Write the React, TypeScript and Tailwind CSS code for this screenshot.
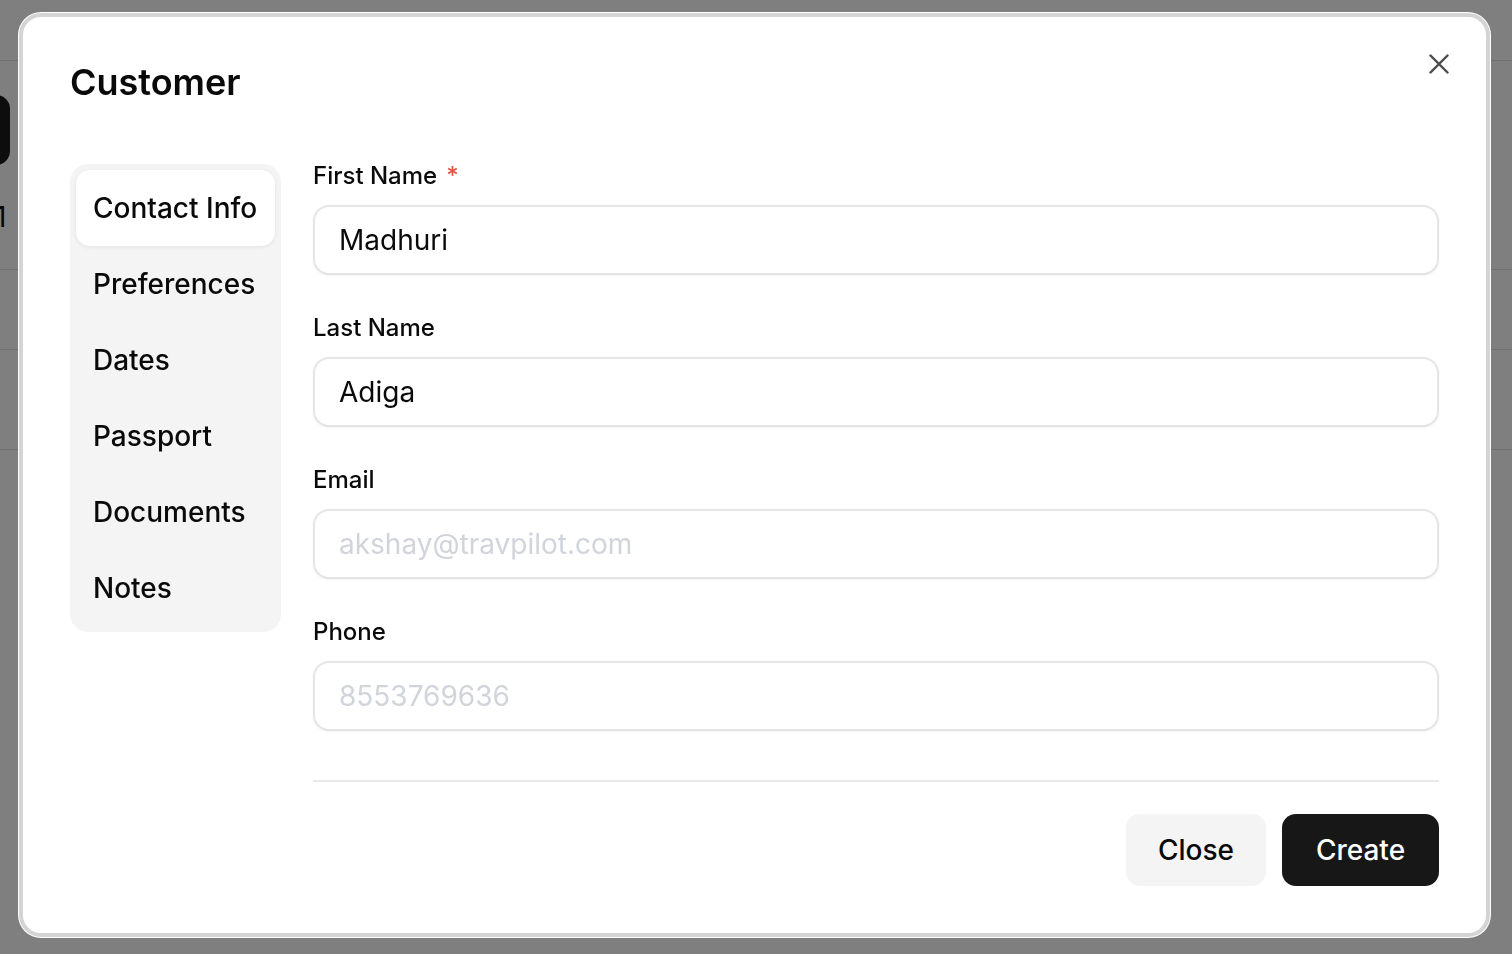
import { useState } from "react";

const tabs = ["Contact Info", "Preferences", "Dates", "Passport", "Documents", "Notes"];

interface FieldProps {
    label: string;
    value?: string;
    placeholder?: string;
    required?: boolean;
}

function Field({ label, value, placeholder, required }: FieldProps) {
    return (
        <div className="flex flex-col">
            <label className="h-[32px] flex items-center text-[24px] font-medium leading-[32px] text-[#0a0a0a]">
                {label}
                {required && <span className="ml-[9px] text-[#e0533d]">*</span>}
            </label>
            <input
                defaultValue={value}
                placeholder={placeholder}
                className="mt-[13px] h-[70px] w-full rounded-[16px] border-2 border-[#e5e5e5] bg-white px-[24px] text-[28px] text-[#0a0a0a] shadow-[0_1px_2px_rgba(0,0,0,0.05)] outline-none placeholder:text-[#d1d5db]"
            />
        </div>
    );
}

export default function App() {
    const [active, setActive] = useState("Contact Info");

    return (
        <div className="relative h-[954px] w-[1512px] overflow-hidden bg-white" style={{ fontFamily: "Inter, 'Noto Sans', sans-serif" }}>
            {/* page behind the dialog */}
            <div className="flex flex-col">
                <div className="h-[61px] border-b border-[#e0e0e0]" />
                <div className="-ml-[70px] mt-[34px] h-[70px] w-[80px] rounded-[14px] bg-[#1a1a1a]" />
                <div className="-ml-[5px] mt-[36px] h-[32px] text-[28px] leading-[32px] text-[#0a0a0a]">1</div>
                <div className="h-[37px] border-b border-[#e0e0e0]" />
                <div className="h-[80px] border-b border-[#e0e0e0]" />
                <div className="h-[100px] border-b border-[#e0e0e0]" />
            </div>

            <div className="fixed inset-0 bg-black/50 pl-[19px] pt-[13px]">
                <div className="relative flex h-[924px] w-[1471px] flex-col rounded-[22px] border-4 border-[#d4d4d4] bg-white px-[47px] pt-[45px] ring-1 ring-white">
                    <button className="absolute right-[37px] top-[37px] h-5 w-5 text-[#4a4a4a]">
                        <svg viewBox="0 0 20 20" width="20" height="20" fill="none" stroke="currentColor" strokeWidth={2.4} strokeLinecap="round">
                            <path d="M1.5 1.5L18.5 18.5M18.5 1.5L1.5 18.5" />
                        </svg>
                    </button>

                    <h2 className="h-[40px] text-[36px] font-semibold leading-[40px] text-[#0a0a0a]">Customer</h2>

                    <div className="mt-[58px] flex items-start gap-[32px]">
                        <div className="mt-[4px] flex w-[211px] shrink-0 flex-col rounded-[18px] bg-[#f4f4f4] p-[6px]">
                            {tabs.map((t) => (
                                <button
                                    key={t}
                                    onClick={() => setActive(t)}
                                    className={`flex h-[76px] items-center whitespace-nowrap rounded-[14px] px-[17px] text-left text-[28px] font-medium text-[#0a0a0a] ${active === t ? "bg-white shadow-[0_1px_4px_rgba(0,0,0,0.08)]" : ""}`}
                                >
                                    {t}
                                </button>
                            ))}
                        </div>

                        <div className="flex flex-1 flex-col">
                            <div className="flex flex-col gap-[37px]">
                                <Field label="First Name" value="Madhuri" required />
                                <Field label="Last Name" value="Adiga" />
                                <Field label="Email" placeholder="akshay@travpilot.com" />
                                <Field label="Phone" placeholder="8553769636" />
                            </div>
                            <div className="mt-[49px] h-[2px] bg-[#e8e8e8]" />
                            <div className="mt-[32px] flex justify-end gap-[16px]">
                                <button className="h-[72px] w-[140px] rounded-[14px] bg-[#f4f4f4] text-[28px] font-medium text-[#0a0a0a]">Close</button>
                                <button className="h-[72px] w-[157px] rounded-[14px] bg-[#171717] text-[28px] font-medium text-white">Create</button>
                            </div>
                        </div>
                    </div>
                </div>
            </div>
        </div>
    );
}
